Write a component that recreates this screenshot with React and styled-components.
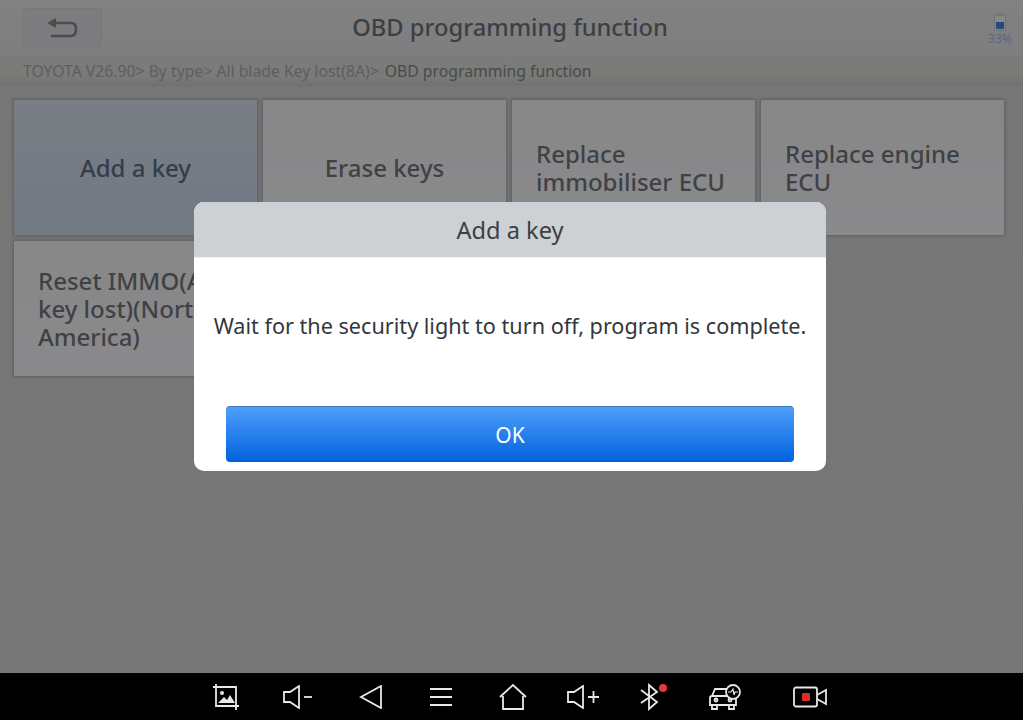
import React from "react";
import styled, { createGlobalStyle } from "styled-components";

const GlobalStyle = createGlobalStyle`
  html, body {
    margin: 0;
    padding: 0;
    background: #000;
  }
  * {
    box-sizing: border-box;
  }
`;

const Screen = styled.div`
  position: relative;
  width: 1023px;
  height: 720px;
  overflow: hidden;
  display: flex;
  flex-direction: column;
  background: #d8d8d7;
  font-family: "Noto Sans", "Open Sans", sans-serif;
`;

const Main = styled.div`
  flex: 1;
  display: flex;
  flex-direction: column;
  min-height: 0;
`;

const Header = styled.div`
  height: 56px;
  flex: none;
  display: grid;
  grid-template-columns: 1fr auto 1fr;
  align-items: center;
  padding: 0 25px 0 22px;
  background: linear-gradient(#ececec, #e6e6e6);
`;

const BackButton = styled.div`
  width: 80px;
  height: 39px;
  margin-top: -1px;
  display: flex;
  align-items: center;
  justify-content: center;
  background: #e2e2e6;
  border: 1px solid #d8d8e0;
  border-radius: 3px;
`;

const Title = styled.div`
  font-size: 23.7px;
  font-weight: 500;
  color: #70747a;
  margin-top: -2px;
`;

const Battery = styled.div`
  justify-self: end;
  width: 26px;
  margin-right: -15px;
  display: flex;
  flex-direction: column;
  align-items: center;
  margin-top: 2px;
  font-size: 12px;
  line-height: 13px;
  color: #a4bce8;
`;

const Breadcrumb = styled.div`
  height: 30px;
  flex: none;
  padding-left: 23px;
  display: flex;
  align-items: center;
  font-size: 15.75px;
  color: #acacb0;
  background: linear-gradient(#e2e2de, #dededa 70%, #cdcdcb);
  span {
    color: #85878b;
    margin-left: 6px;
  }
`;

const TileGrid = styled.div`
  display: grid;
  grid-template-columns: repeat(4, 243px);
  grid-auto-rows: 135px;
  gap: 6px;
  padding: 14px 0 0 14px;
`;

const Tile = styled.div`
  display: flex;
  align-items: center;
  justify-content: ${(p) => (p.$left ? "flex-start" : "center")};
  padding: ${(p) => (p.$left ? "0 20px 0 24px" : "0")};
  font-size: 24px;
  font-weight: 500;
  line-height: 28px;
  color: ${(p) => (p.$active ? "#5f6f8c" : "#75777e")};
  background: ${(p) =>
    p.$active ? "linear-gradient(#dbe6f0, #cfdcee)" : "linear-gradient(#f6f6f8, #fbfbff)"};
  box-shadow: 0 0 3px 1px rgba(120, 125, 145, 0.5);
  white-space: nowrap;
  overflow: hidden;
`;

const Backdrop = styled.div`
  position: absolute;
  top: 0;
  left: 0;
  right: 0;
  bottom: 47px;
  padding: 202px 0 0 194px;
  background: rgba(0, 0, 0, 0.45);
`;

const Dialog = styled.div`
  width: 632px;
  height: 269px;
  display: flex;
  flex-direction: column;
  border-radius: 10px;
  overflow: hidden;
  background: #fff;
`;

const DialogTitle = styled.div`
  height: 56px;
  flex: none;
  display: flex;
  align-items: center;
  justify-content: center;
  padding-bottom: 2px;
  font-size: 23.6px;
  color: #3b3f44;
  background: #cdd1d4;
  border-top: 2px solid #c9d0dc;
  border-bottom: 1px solid #eef0f0;
`;

const DialogBody = styled.div`
  height: 148px;
  flex: none;
  display: flex;
  align-items: center;
  justify-content: center;
  padding-bottom: 14px;
  font-size: 21.63px;
  color: #33373c;
`;

const OkButton = styled.div`
  height: 56px;
  margin: 0 32px;
  display: flex;
  align-items: center;
  justify-content: center;
  font-size: 21px;
  color: #fff;
  border-radius: 4px;
  border-top: 1px solid #3a78c0;
  background: linear-gradient(#4f9efb, #0062dc);
`;

const NavBar = styled.div`
  height: 47px;
  flex: none;
  display: flex;
  align-items: center;
  padding-left: 212px;
  background: #000;
`;

const NavIcon = styled.svg`
  flex: none;
  margin-left: ${(p) => p.$gap}px;
  fill: none;
  stroke: #e8e8e8;
  stroke-width: 1.8;
`;

const BackArrow = () => (
  <svg width="34" height="22" viewBox="0 0 34 22" fill="none">
    <path d="M2 6 L11 1 V11 Z" fill="#8a8a8e" />
    <path d="M10 6 H26 Q31 6 31 12 Q31 19 26 19 H6" stroke="#8a8a8e" strokeWidth="2.6" />
  </svg>
);

const BatteryIcon = () => (
  <svg width="14" height="19" viewBox="0 0 14 19">
    <rect x="4" y="0" width="6" height="2" fill="#c8d4dc" />
    <rect x="1.5" y="2.5" width="11" height="15" fill="#f4f8fb" stroke="#c8d4dc" />
    <rect x="3" y="9" width="8" height="7" fill="#4a88e0" />
  </svg>
);

const tiles = [
  { id: 1, lines: ["Add a key"], active: true },
  { id: 2, lines: ["Erase keys"] },
  { id: 3, lines: ["Replace", "immobiliser ECU"], left: true },
  { id: 4, lines: ["Replace engine", "ECU"], left: true },
  { id: 5, lines: ["Reset IMMO(All", "key lost)(North", "America)"], left: true },
];

const App = () => {
  return (
    <Screen>
      <GlobalStyle />
      <Main>
        <Header>
          <BackButton>
            <BackArrow />
          </BackButton>
          <Title>OBD programming function</Title>
          <Battery>
            <BatteryIcon />
            33%
          </Battery>
        </Header>
        <Breadcrumb>
          TOYOTA V26.90&gt; By type&gt; All blade Key lost(8A)&gt;
          <span>OBD programming function</span>
        </Breadcrumb>
        <TileGrid>
          {tiles.map((t) => (
            <Tile key={t.id} $active={t.active} $left={t.left}>
              <div>
                {t.lines.map((l) => (
                  <div key={l}>{l}</div>
                ))}
              </div>
            </Tile>
          ))}
        </TileGrid>
      </Main>
      <NavBar>
        <NavIcon $gap={0} width="28" height="28" viewBox="0 0 28 28">
          <path d="M4 1 V23 H27 M1 4 H24 V27" />
          <circle cx="10" cy="10" r="2" fill="#e8e8e8" stroke="none" />
          <path d="M6 20 L12 14 L15 17 L18 12 L23 20 Z" fill="#e8e8e8" stroke="none" />
        </NavIcon>
        <NavIcon $gap={43} width="30" height="24" viewBox="0 0 30 24">
          <path d="M1 7 H7 L16 1 V23 L7 17 H1 Z" />
          <path d="M21 12 H29" />
        </NavIcon>
        <NavIcon $gap={46} width="24" height="24" viewBox="0 0 24 24">
          <path d="M22 1 V23 L2 12 Z" />
        </NavIcon>
        <NavIcon $gap={47} width="22" height="20" viewBox="0 0 22 20">
          <path d="M0 2 H22 M0 10 H22 M0 18 H22" />
        </NavIcon>
        <NavIcon $gap={47} width="28" height="26" viewBox="0 0 28 26">
          <path d="M1 13 L14 1 L27 13 M4 12 V25 H24 V12" />
        </NavIcon>
        <NavIcon $gap={40} width="33" height="24" viewBox="0 0 33 24">
          <path d="M1 7 H7 L16 1 V23 L7 17 H1 Z" />
          <path d="M21 12 H32 M26.5 6 V18" />
        </NavIcon>
        <NavIcon $gap={40} width="28" height="28" viewBox="0 0 28 28">
          <path d="M1 7 L17 19 L9 26 V2 L17 9 L1 20" />
          <circle cx="23" cy="5" r="4" fill="#e53a3a" stroke="none" />
        </NavIcon>
        <NavIcon $gap={40} width="34" height="26" viewBox="0 0 34 26" strokeWidth="1.5">
          <path d="M4 12 L7 5 H20 M2 14 Q2 12 4 12 H26 Q28 12 28 15 V21 H2 Z M4 21 V25 H9 V21 M21 21 V25 H26 V21" />
          <circle cx="8" cy="16" r="1.5" />
          <circle cx="22" cy="16" r="1.5" />
          <circle cx="25" cy="8" r="7" fill="#000" />
          <path d="M20 8 H23 L25 5 L26 11 L27 8 H30" strokeWidth="1.2" />
        </NavIcon>
        <NavIcon $gap={51} width="34" height="22" viewBox="0 0 34 22" strokeWidth="1.5">
          <rect x="1" y="1.5" width="23" height="19" rx="2" />
          <path d="M24 9 L33 4 V18 L24 13" />
          <rect x="9" y="7" width="8" height="8" rx="1" fill="#e02a2a" stroke="none" />
        </NavIcon>
      </NavBar>
      <Backdrop>
        <Dialog>
          <DialogTitle>Add a key</DialogTitle>
          <DialogBody>Wait for the security light to turn off, program is complete.</DialogBody>
          <OkButton>OK</OkButton>
        </Dialog>
      </Backdrop>
    </Screen>
  );
};

export default App;
